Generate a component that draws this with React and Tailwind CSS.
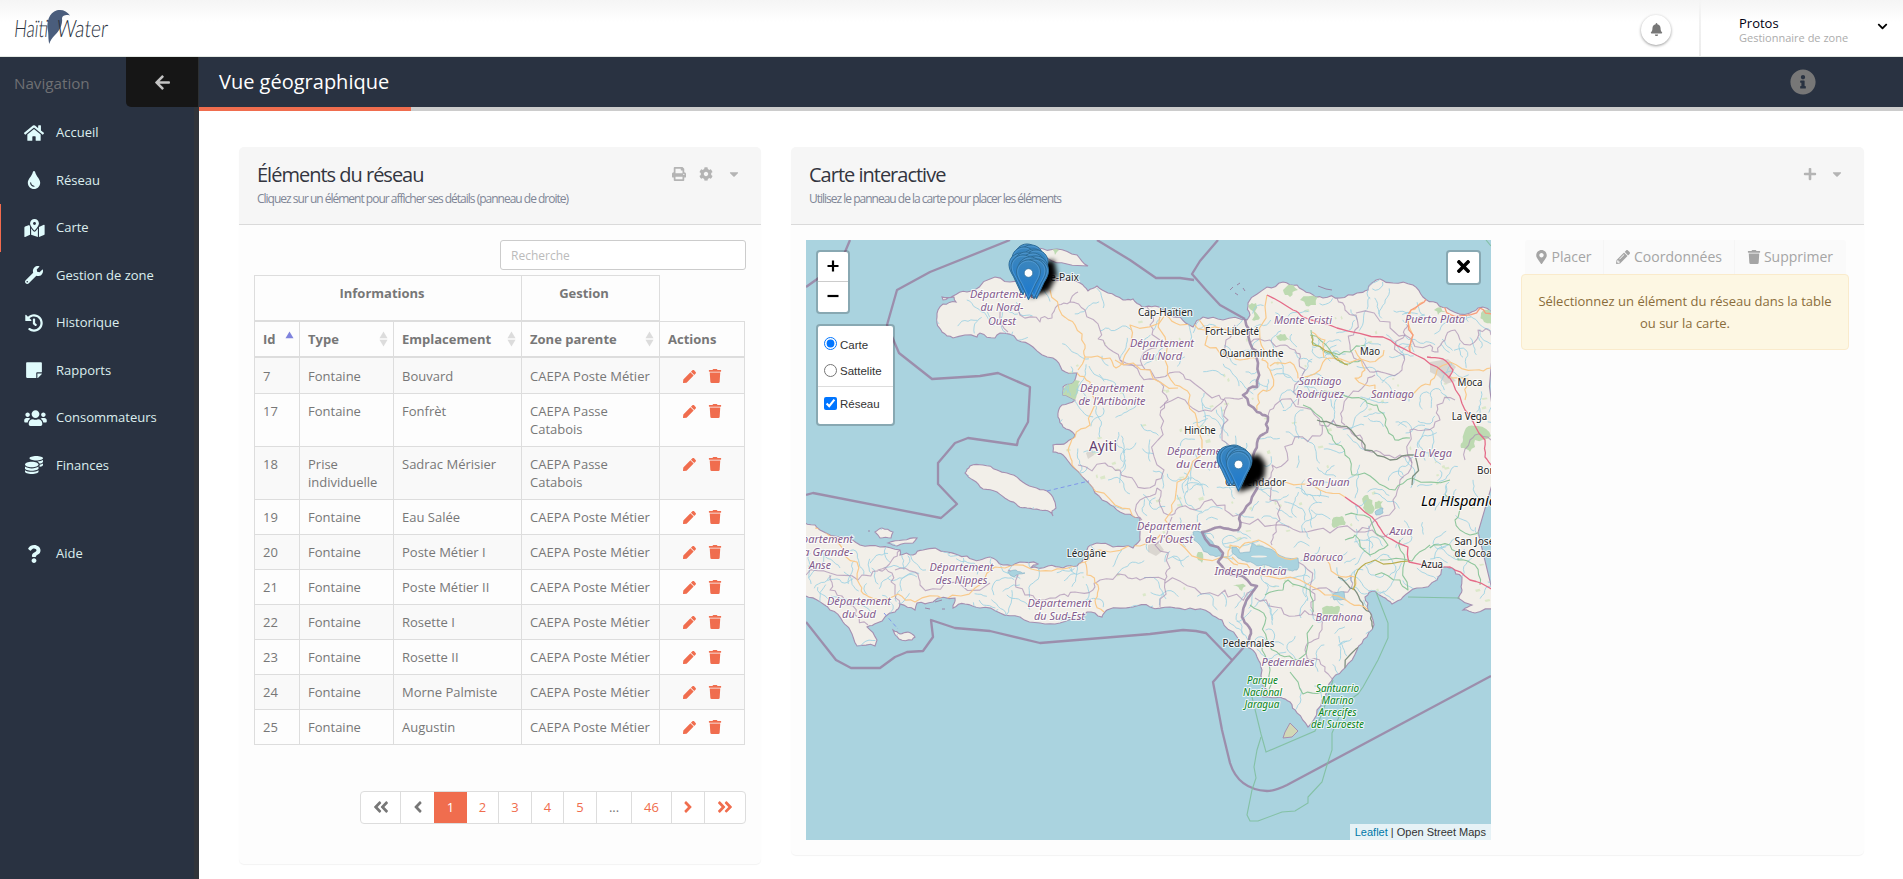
import React from "react";
import {
  FaHome, FaTint, FaMapMarkedAlt, FaWrench, FaHistory, FaStickyNote, FaUsers, FaCoins, FaQuestion,
  FaArrowLeft, FaBell, FaChevronDown, FaInfoCircle, FaPrint, FaCog, FaCaretDown, FaPlus,
  FaMapMarkerAlt, FaPen, FaPencilAlt, FaTrash, FaAngleDoubleLeft, FaAngleLeft, FaAngleRight,
  FaAngleDoubleRight, FaTimes,
} from "react-icons/fa";

/* ---------- map geometry ---------- */

function rng(seed) {
  let s = seed;
  return () => {
    s = (s * 1664525 + 1013904223) % 4294967296;
    return s / 4294967296;
  };
}

const parse = (str) => str.trim().split(/\s+/).map((p) => p.split(",").map(Number));

// Midpoint displacement gives coast lines, borders and roads a natural edge.
function rough(str, amount, seed, closed) {
  const rand = rng(seed);
  let pts = parse(str);
  if (closed) pts.push(pts[0]);
  for (let k = 0; k < 2; k++) {
    const out = [pts[0]];
    for (let i = 1; i < pts.length; i++) {
      const [ax, ay] = pts[i - 1];
      const [bx, by] = pts[i];
      const len = Math.hypot(bx - ax, by - ay);
      if (len > 4) {
        const d = (rand() - 0.5) * amount * len;
        out.push([(ax + bx) / 2 - ((by - ay) / len) * d, (ay + by) / 2 + ((bx - ax) / len) * d]);
      }
      out.push([bx, by]);
    }
    pts = out;
  }
  return "M" + pts.map(([x, y]) => x.toFixed(1) + " " + y.toFixed(1)).join("L") + (closed ? "Z" : "");
}

const straight = (str) => "M" + parse(str).map((p) => p.join(" ")).join("L");

const MAINLAND =
  "937,317 938,310 943,304 956,302 954,297 943,300 942,297 953,296 967,292 990,279 1010,282 1027,282 1047,283 1063,280 1080,283 1088,291 1097,286 1108,293 1123,300 1133,299 1142,307 1155,306 1167,315 1180,317 1193,327 1203,317 1223,320 1247,320 1250,315 1248,303 1267,287 1283,282 1297,285 1310,293 1323,298 1340,298 1357,293 1368,290 1372,283 1380,279 1393,283 1413,285 1423,297 1437,303 1450,310 1470,313 1478,308 1496,313 1496,606 1475,613 1463,610 1472,605 1458,598 1462,590 1462,577 1452,568 1442,568 1437,580 1417,588 1403,597 1392,604 1383,597 1375,591 1365,597 1368,610 1373,620 1367,637 1357,650 1345,668 1333,678 1327,690 1317,710 1308,727 1297,713 1290,702 1280,697 1263,697 1267,690 1262,670 1257,657 1247,647 1237,637 1222,620 1210,613 1190,608 1170,607 1150,607 1133,607 1107,610 1102,617 1087,612 1080,618 1060,623 1040,623 1020,617 1000,613 980,608 965,604 953,608 955,598 933,602 917,603 915,610 900,604 895,612 877,623 867,627 877,640 875,646 857,646 850,630 843,622 830,610 817,600 800,595 800,521 815,525 820,530 843,538 860,545 880,547 900,550 900,555 913,555 923,550 947,552 967,556 980,560 990,557 1003,565 1020,562 1038,564 1030,568 1048,566 1063,568 1077,566 1085,558 1088,547 1097,543 1113,547 1133,548 1140,540 1140,527 1140,518 1120,512 1107,502 1093,488 1073,467 1063,455 1053,452 1053,445 1067,442 1075,435 1063,427 1058,417 1062,405 1075,400 1063,395 1063,387 1073,383 1077,373 1062,370 1053,358 1033,347 1017,340 1000,333 995,338 980,333 977,337 953,338 942,332 937,323";

const ISLANDS = [
  "1030,250 1038,248 1057,249 1077,255 1088,266 1067,264 1047,258",
  "965,473 970,466 983,465 997,470 1007,473 1020,480 1033,487 1047,491 1054,500 1056,508 1052,511 1053,516 1050,512 1040,510 1027,508 1018,506 1008,500 997,492 983,489 973,480",
  "875,532 882,528 893,532 891,538 880,538",
  "888,543 903,540 917,538 913,543 897,546",
  "893,630 900,634 908,632 915,637 912,640 899,639",
];
const LAND = [rough(MAINLAND, 0.3, 11, true), ...ISLANDS.map((s, i) => rough(s, 0.2, 30 + i, true))];

const LAKES = [
  "1232,547 1236,547 1240,553 1250,552 1252,543 1262,546 1275,552 1298,558 1297,570 1288,570 1277,568 1260,566 1247,562 1238,558 1232,552",
  "1193,532 1205,533 1214,545 1222,555 1210,555 1200,545 1194,540",
  "1008,572 1016,570 1025,573 1014,577",
  "1333,594 1344,592 1346,600 1334,600",
  "1375,512 1383,508 1383,513 1376,515",
];

const GREENS = [
  "1283,290 1293,284 1298,290 1290,297 1285,295",
  "1300,300 1318,297 1316,305 1306,306",
  "1248,305 1256,303 1260,318 1252,320",
  "1434,310 1441,307 1446,312 1438,315",
  "1481,313 1496,310 1496,326 1484,322",
  "1466,428 1478,426 1491,436 1475,440 1470,452 1461,448 1463,440",
  "1364,496 1368,495 1374,507 1370,514 1363,508",
  "1332,520 1342,516 1345,525 1334,528",
  "1322,608 1332,606 1340,607 1338,615 1322,614",
  "1064,388 1080,381 1078,392 1070,401 1062,394",
  "1052,249 1059,250 1055,255",
  "1276,336 1285,334 1290,340 1280,341",
  "1198,552 1202,552 1202,563 1198,560",
  "1233,586 1246,586 1242,591",
  "1375,502 1383,501 1382,508 1375,509",
];

const MARITIME = [
  "850,240 845,252 830,270 806,287",
  "1010,240 930,272 897,290 887,325 899,353 932,379 980,376 998,373 1030,387 1028,422 1018,440 1017,445 968,438 955,443 938,463 938,484 957,504 941,518 813,493 806,495",
  "1097,240 1130,260 1156,278 1180,278 1194,280",
  "1218,240 1200,261 1192,274 1206,290 1220,305 1245,319",
  "1232,660 1206,633 1196,631 1183,630 1150,634 1040,643 990,631 955,628 931,620 933,637 923,651 907,652 895,657 880,668 851,668 836,660 806,622",
];
const BORDER =
  "1245,319 1250,343 1258,363 1257,387 1243,395 1257,412 1268,417 1267,432 1257,443 1253,460 1252,497 1240,515 1238,530 1220,527 1202,532 1223,553 1218,562 1237,575 1257,586 1242,617 1249,627 1249,640 1244,647";

const PROVINCES = [
  "1008,332 1000,315 1005,307 1020,315 1040,322 1052,318 1058,305 1070,302 1078,292",
  "1070,302 1085,310 1100,330 1105,345 1120,360 1142,365 1148,350 1160,340 1150,325 1147,307",
  "1120,360 1140,375 1160,382 1168,400 1160,415 1158,440 1164,470 1155,485 1135,482 1120,470 1105,463 1078,465",
  "1142,365 1155,378 1175,372 1190,380 1212,398 1225,400 1228,420 1222,440 1228,455",
  "1228,358 1226,340 1235,325",
  "1160,408 1185,400 1205,410 1225,398 1243,398",
  "1157,488 1160,505 1172,515 1180,507 1200,508 1225,505 1238,515",
  "1157,488 1140,500 1142,520",
  "1172,517 1155,545 1170,568 1165,580 1140,580 1125,575 1100,580 1093,590",
  "1093,590 1075,592 1060,595 1040,600 1025,595 1018,575 1008,570",
  "900,550 892,560 878,570 892,573 895,590 900,605",
  "895,570 915,572 920,585 945,583 990,583",
  "806,575 830,573 858,580 862,575 878,571",
  "830,575 830,590 845,600 855,615 868,625",
  "1165,580 1160,607",
  "1165,583 1195,588 1225,590 1228,597 1255,590",
  "1337,298 1345,310 1356,315 1355,330 1350,345 1358,360 1370,372 1385,373 1402,370 1404,356 1395,345 1405,335 1408,325",
  "1356,313 1390,322 1405,335 1430,345 1438,352 1445,340 1455,330 1470,345 1478,330 1491,335",
  "1250,343 1270,340 1285,345 1295,350 1299,360 1300,380 1298,405",
  "1268,417 1275,405 1305,408 1320,425 1345,428 1360,435 1365,450 1380,452 1400,455 1412,463",
  "1322,425 1320,436 1295,437 1288,460 1272,465 1268,480 1270,500 1280,520 1273,535 1272,545",
  "1345,425 1343,410 1350,395 1365,385 1375,375",
  "1240,522 1275,525 1300,532 1330,533 1365,532 1390,533",
  "1412,463 1400,480 1393,500 1375,520 1358,532",
  "1412,463 1410,430 1425,430 1440,420 1437,405 1455,400",
  "1465,460 1470,440 1475,435 1491,440",
  "1255,598 1275,607 1295,616 1315,615 1322,625 1314,640 1305,650 1310,660 1325,667 1333,680",
  "1298,562 1312,580 1315,600 1312,615",
  "1312,590 1340,593 1352,586 1350,575",
];

const GREEN_LINES = [
  "1311,330 1312,342 1328,353 1350,352 1365,345",
  "1310,335 1330,350 1345,364 1362,360",
  "1303,405 1325,425 1333,440 1345,455 1352,475 1375,480 1395,490 1412,478 1450,480",
  "1308,395 1340,392 1365,400 1377,405 1385,425 1395,440 1410,438",
  "1345,515 1370,518 1388,545 1370,555 1355,535 1345,540",
  "1375,575 1400,580 1408,590 1405,560 1400,540",
  "1250,605 1266,618 1267,640 1280,655 1298,660 1313,625",
  "1265,595 1283,590 1288,580 1310,590 1313,612",
  "1430,548 1450,545 1458,560 1475,565 1480,585",
  "1445,495 1460,505 1455,520 1470,535 1491,530",
  "1380,560 1412,561 1430,545",
  "1258,640 1262,650 1270,670 1270,695",
  "1290,672 1303,694 1322,692 1333,680",
];

const DARK_LINES = [
  "1317,420 1335,425 1355,435 1365,450 1390,460 1415,455 1412,485",
  "1338,577 1350,588 1360,600 1370,612 1372,625 1362,645 1345,668",
];

const ROADS = [
  "1050,290 1062,315 1075,325 1085,345 1085,357 1078,370",
  "1085,357 1110,358 1116,368 1125,355 1130,325 1165,315 1180,325 1205,330 1245,332",
  "1077,373 1090,382 1095,400 1090,425 1075,437 1068,450 1072,465 1090,485 1115,505 1140,520",
  "1160,315 1165,360 1175,385 1190,395 1197,420 1202,440 1190,470 1175,500 1165,520 1172,530",
  "1115,360 1150,370 1178,388",
  "815,528 840,545 857,562 860,585 866,595 880,600 898,594 915,602 945,600 975,588 1005,568 1040,571 1063,569 1085,562 1100,550 1140,546 1160,535 1185,548 1222,557 1238,565",
  "1085,562 1087,575 1098,585 1095,600 1104,612",
  "1267,295 1260,340 1262,360 1270,370 1270,390 1258,395 1257,410",
  "1270,366 1290,362 1298,378 1320,370 1330,358 1370,362 1384,350",
  "1324,358 1325,340 1312,332",
  "1228,557 1230,545 1240,548 1252,542 1275,550 1297,558",
  "1285,482 1320,490 1345,497",
  "1232,557 1260,575 1300,580 1325,595 1350,603 1368,610",
  "1320,555 1337,575 1355,577 1353,590",
  "1437,370 1450,362 1475,370 1491,368",
  "1450,378 1470,380 1465,400",
  "1437,370 1430,385 1415,392 1395,398",
  "1355,350 1365,370 1355,378 1375,385 1375,398",
  "1410,352 1413,335 1411,310 1423,302",
  "1200,310 1205,345 1225,355 1240,360 1255,358",
];
const RED_ROADS = [
  "1267,295 1293,310 1303,317 1337,328 1383,337 1410,352 1437,367 1453,383 1465,410 1485,440 1485,457 1493,467",
  "1427,357 1443,359 1453,370 1448,378",
  "1345,497 1372,517 1380,528 1387,537 1408,547 1409,562 1450,567 1470,580 1493,590",
];
const ORANGE_ROADS = ["1410,352 1413,335 1411,310 1427,298 1445,308 1460,316 1480,308 1493,314"];
const OLIVE_ROADS = ["1353,590 1358,570 1375,560 1410,561", "1312,335 1313,345 1335,358 1348,365"];

// Small tributaries, clipped to the land shapes.
const STREAMS = (() => {
  const rand = rng(77);
  const out = [];
  for (let i = 0; i < 700; i++) {
    let x = 806 + rand() * 685;
    let y = 275 + rand() * 450;
    let a = rand() * Math.PI * 2;
    const n = 4 + Math.floor(rand() * 8);
    let d = `M${x.toFixed(1)} ${y.toFixed(1)}`;
    for (let k = 0; k < n; k++) {
      a += (rand() - 0.5) * 1.5;
      x += Math.cos(a) * 3.2;
      y += Math.sin(a) * 3.2;
      d += `L${x.toFixed(1)} ${y.toFixed(1)}`;
    }
    // Gonâve has hardly any rivers.
    if (!(x > 955 && x < 1065 && y > 455 && y < 525)) out.push(d);
  }
  return out.join("");
})();

const MEADOWS = (() => {
  const rand = rng(5);
  const out = [];
  for (let i = 0; i < 110; i++) {
    const x = 1060 + rand() * 430;
    const y = 290 + rand() * 330;
    const w = 1 + rand() * 4;
    const h = 1 + rand() * 2.5;
    out.push(`M${x.toFixed(1)} ${y.toFixed(1)}l${w.toFixed(1)} ${(-h / 2).toFixed(1)}l1 ${h.toFixed(1)}l${(-w).toFixed(1)} 1z`);
  }
  return out.join("");
})();

// [text, centre x, baseline y, width]
const REGIONS = [
  ["Département", 1002, 298, 64], ["du Nord-", 1002, 311, 43], ["Ouest", 1002, 325, 28],
  ["Département", 1162, 347, 64], ["du Nord", 1162, 360, 40],
  ["Département", 1112, 392, 64], ["de l'Artibonite", 1112, 405, 67],
  ["Département", 1199, 455, 64], ["du Centre", 1202, 468, 52],
  ["Département", 1169, 530, 64], ["de l'Ouest", 1169, 543, 48],
  ["Département", 821, 543, 64], ["de la Grande-", 819, 556, 68], ["Anse", 820, 569, 22],
  ["Département", 859, 605, 64], ["du Sud", 859, 618, 34],
  ["Département", 961.5, 571, 64], ["des Nippes", 961.5, 584, 52],
  ["Département", 1059.5, 607, 64], ["du Sud-Est", 1059.5, 620, 51],
  ["Monte Cristi", 1303, 324, 58], ["Puerto Plata", 1435, 323, 60],
  ["Santiago", 1320, 385, 43], ["Rodríguez", 1320, 398, 48], ["Santiago", 1392.5, 398, 43],
  ["La Vega", 1433, 457, 38], ["San Juan", 1328, 486, 43], ["Azua", 1401, 535, 23],
  ["Baoruco", 1323, 561, 40], ["Independencia", 1250.5, 575, 72], ["Barahona", 1339, 621, 47],
  ["Pedernales", 1288, 666, 53],
];
const TOWNS = [
  ["Cap-Haïtien", 1165.5, 316, 55], ["Fort-Liberté", 1232, 335, 54], ["Ouanaminthe", 1251.5, 357, 64],
  ["Mao", 1370, 355, 20], ["Moca", 1470, 386, 25], ["La Vega", 1469.5, 420, 35.5], ["Bonao", 1492, 474, 30],
  ["Hinche", 1200, 434, 31.5], ["Comendador", 1255.5, 486, 61], ["Léogâne", 1086.5, 557, 39.5],
  ["San José", 1474.5, 545, 40], ["de Ocoa", 1473, 557, 37], ["Azua", 1432, 568, 22],
  ["Pedernales", 1248.5, 647, 52], ["Port-de-Paix", 1049.5, 281, 59],
];
const PARKS = [
  ["Parque", 1262.5, 684, 31], ["Nacional", 1262.5, 696, 39], ["Jaragua", 1262, 708, 35],
  ["Santuario", 1337.5, 692, 43], ["Marino", 1337.5, 704, 32], ["Arrecifes", 1337.5, 716, 38],
  ["del Suroeste", 1337.5, 728, 53],
];

function Labels({ items, className, size }) {
  return (
    <g className={className} fontSize={size} textAnchor="middle" stroke="#ffffff" strokeOpacity="0.75" strokeWidth="2.2" strokeLinejoin="round" style={{ paintOrder: "stroke" }}>
      {items.map(([t, x, y, w], i) => (
        <text key={i} x={x} y={y} textLength={w} lengthAdjust="spacingAndGlyphs">{t}</text>
      ))}
    </g>
  );
}

function Pin({ x, y }) {
  return (
    <g transform={`translate(${x - 12.5} ${y - 40.5})`}>
      <path d="M12.5.5C5.8.5.5 5.8.5 12.4c0 4.6 2.7 8.4 4.6 11.9L12.5 40.3l7.4-16c1.9-3.5 4.6-7.3 4.6-11.9C24.5 5.8 19.2.5 12.5.5z" fill="url(#pin)" stroke="#2e6c97" strokeWidth="1" />
      <path d="M12.5 1.6C6.4 1.6 1.6 6.4 1.6 12.4c0 4.3 2.5 7.9 4.5 11.5L12.5 37.7l6.4-13.8c2-3.6 4.5-7.2 4.5-11.500C23.400 6.400 18.600 1.600 12.500 1.600z" fill="none" stroke="#5ea4da" strokeOpacity="0.6" strokeWidth="1" />
      <circle cx="12.5" cy="13.500" r="4.300" fill="#ffffff" stroke="#2e6c97" strokeWidth="0.700" />
    </g>
  );
}

const PINS_NORTH = [
  [1027, 284], [1031, 285], [1024, 287], [1034, 289], [1021, 293], [1036, 290], [1026, 292],
  [1033, 293], [1023, 295], [1036, 296], [1036.5, 299], [1030, 297], [1034, 299], [1028.5, 300],
];
const PINS_CENTRE = [[1234, 485], [1229, 486], [1232, 486], [1238, 487], [1240, 489], [1238.5, 491.5]];

function MapDrawing() {
  const list = (arr, amount, base) => arr.map((s, i) => <path key={i} d={rough(s, amount, base + i)} />);
  return (
    <svg className="block h-full w-full" viewBox="806 240 685 600" fontFamily="'Noto Sans', sans-serif">
      <defs>
        <linearGradient id="pin" x1="0" y1="0" x2="0" y2="1">
          <stop offset="0" stopColor="#3c86bd" />
          <stop offset="1" stopColor="#1a78d0" />
        </linearGradient>
        <filter id="soft" x="-50%" y="-50%" width="200%" height="200%"><feGaussianBlur stdDeviation="2.6" /></filter>
        <clipPath id="land">{LAND.map((d, i) => <path key={i} d={d} />)}</clipPath>
      </defs>
      <rect x="806" y="240" width="685" height="600" fill="#aad3df" />
      <g fill="#f2efe9" stroke="#a58fb0" strokeWidth="1.1">
        {LAND.map((d, i) => <path key={i} d={d} />)}
      </g>
      <path d="M1290 723L1294 727L1298 731L1292 737L1283 738L1285 732Z" fill="#d1d8b6" stroke="#a58fb0" strokeWidth="1" />
      <g fill="none" clipPath="url(#land)" strokeLinejoin="round">
        <path d={MEADOWS} fill="#d5e6c0" fillOpacity="0.8" />
        <g fill="#bddab1">{GREENS.map((s, i) => <path key={i} d={rough(s, 0.5, 60 + i, true)} />)}</g>
        <g fill="#dad6d0">
          <path d="M1430 362l18-3 8 8-6 8 6 6-10 3-8-8-8-4z" />
          <path d="M1148 545l10-3 6 8-8 6-8-4z" /><path d="M1086 453l6-4 2 6-6 4z" />
        </g>
        <path d={STREAMS} stroke="#9fd2e3" strokeWidth="0.9" />
        <g stroke="#a98fb2" strokeWidth="1.1" strokeOpacity="0.7">{list(PROVINCES, 0.6, 100)}</g>
        <g stroke="#8fc69c" strokeWidth="1.1">{list(GREEN_LINES, 0.4, 200)}</g>
        <g stroke="#7f9080" strokeWidth="1.3">{list(DARK_LINES, 0.4, 240)}</g>
        <g fill="#aad3df" stroke="#8fb8cc" strokeWidth="0.7">{LAKES.map((s, i) => <path key={i} d={rough(s, 0.3, 90 + i, true)} />)}</g>
        <g stroke="#f9c98a" strokeWidth="1.2">{list(ROADS, 0.4, 300)}</g>
        <g stroke="#b9ad4e" strokeWidth="1.1">{list(OLIVE_ROADS, 0.3, 330)}</g>
        <g stroke="#f79c7c" strokeWidth="1.3">{list(ORANGE_ROADS, 0.4, 340)}</g>
        <g stroke="#e56b88" strokeWidth="1.3">{list(RED_ROADS, 0.15, 350)}</g>
      </g>
      <ellipse cx="1259" cy="556.5" rx="8" ry="1" fill="#f2efe9" />
      <g fill="none" stroke="#9a86a6" strokeOpacity="0.9" strokeWidth="2.3" strokeLinejoin="round">
        {MARITIME.map((s, i) => <path key={i} d={straight(s)} />)}
        <path d="M1244 647L1213 682L1222 730L1230 763C1236 782 1250 790 1267 791C1275 791 1281 788 1287 785L1491 676" />
        <path d={rough(BORDER, 0.35, 8)} strokeWidth="2.6" />
      </g>
      <g fill="none" stroke="#7fbf9f" strokeOpacity="0.9" strokeWidth="1.1">
        <path d="M1252 697L1261 734L1266 752L1315 731L1327 700L1333 680" />
        <path d="M1261 737L1257 750L1254 767L1256 778L1252 790L1247 815L1250 821L1258 821L1282 812L1295 811L1308 803L1308 797L1322 782L1327 765L1332 750L1332 733L1345 703L1358 694L1363 687L1378 660L1388 638L1388 623L1376 592" />
        <path d="M1408 597L1460 598M1486 240L1491 246" />
      </g>
      <path d="M1047 491L1089 481M884 613L898 629" stroke="#7f96ea" strokeWidth="1" strokeDasharray="4 3" fill="none" />
      <g fill="none" stroke="#9a86a6" strokeWidth="1">
        <path d="M1230 290l3-3m2 6l3 2m-1-10l3-2m3 5l2 3M1318 286l8 3 6 1M868 531h2M925 608l5 1M942 609l3 0M935 602l7-2" />
      </g>

      <Labels items={REGIONS} className="fill-[#845c8d] italic" size="11" />
      <Labels items={TOWNS} className="fill-[#262626]" size="10.5" />
      <Labels items={PARKS} className="fill-[#0a8420] italic" size="10" />
      <Labels items={[["Ayiti", 1103, 451, 28]]} className="fill-[#643f70]" size="13.5" />
      <Labels items={[["La Hispaniola", 1465, 506, 88]]} className="fill-black italic" size="14" />

      <g filter="url(#soft)">
        <path d="M1030 298L1042 262L1054 260L1057 275L1049 291Z" />
        <path d="M1240 490L1246 460L1258 456L1264 464L1263 476L1252 486Z" strokeWidth="3" stroke="#000000" />
      </g>
      {PINS_NORTH.map(([x, y], i) => <Pin key={i} x={x} y={y} />)}
      {PINS_CENTRE.map(([x, y], i) => <Pin key={i} x={x} y={y} />)}
    </svg>
  );
}

function MapView() {
  const box = "absolute box-border rounded-[4px] border-2 border-black/20 bg-white bg-clip-padding";
  return (
    <div className="relative h-[600px] w-[685px] shrink-0 overflow-hidden font-['Liberation_Sans',sans-serif] text-[12px] text-[#333]">
      <MapDrawing />
      <div className={`${box} left-[10px] top-[10px] h-[64px] w-[34px] text-center font-bold text-black`}>
        <div className="flex h-[30px] items-center justify-center border-b border-[#ccc] pb-[2px]">
          <svg className="size-[12px]" viewBox="0 0 12 12"><path d="M6 .5v11M.5 6h11" stroke="#000" strokeWidth="2.2" /></svg>
        </div>
        <div className="flex h-[30px] items-center justify-center pb-[3px]">
          <svg className="size-[12px]" viewBox="0 0 12 12"><path d="M.5 6h11" stroke="#000" strokeWidth="2.2" /></svg>
        </div>
      </div>
      <div className={`${box} left-[10px] top-[84px] flex h-[102px] w-[79px] flex-col text-[11.5px]`}>
        <label className="mt-[10px] flex h-[18px] items-center gap-[3px] pl-[6px]">
          <input type="radio" name="base" defaultChecked className="m-0 size-[13px] -translate-y-[2px]" />
          <span className="translate-y-[1px]">Carte</span>
        </label>
        <label className="mt-[9px] flex h-[18px] items-center gap-[3px] pl-[6px]">
          <input type="radio" name="base" className="m-0 size-[13px] -translate-y-[2px]" />
          <span>Sattelite</span>
        </label>
        <div className="mt-[5px] border-t border-[#ddd]" />
        <label className="mt-[9px] flex h-[18px] items-center gap-[3px] pl-[6px]">
          <input type="checkbox" defaultChecked className="m-0 size-[13px] -translate-y-[2px]" />
          <span>Réseau</span>
        </label>
      </div>
      <div className={`${box} right-[10px] top-[10px] flex h-[35px] w-[35px] items-center justify-center pb-[2px] text-black`}>
        <FaTimes className="size-[19px]" />
      </div>
      <div className="absolute bottom-0 right-0 h-[16px] bg-white/70 px-[5px] text-[11px] leading-[16px] whitespace-nowrap">
        <span className="text-[#0078a8]">Leaflet</span> | Open Street Maps
      </div>
    </div>
  );
}

/* ---------- shell ---------- */

function Logo() {
  return (
    <svg className="h-[52px] w-[124px]" viewBox="0 0 124 52" fontFamily="Lato, sans-serif" fontWeight="300" fill="#2a3240">
      <path d="M49.3 44C48 38 48.6 35 48 31C46 22 49 13 57 10.3C62 9 67 11 70 15.5C66 14.5 63 15 62 18C63 25 59 31 55 35C52 38 50 41 49.3 44Z" fill="#4a5d7c" />
      <g fontSize="24" transform="skewX(-6)">
        <text x="17.5" y="37.5" textLength="34" lengthAdjust="spacingAndGlyphs">Haïti</text>
        <text x="60" y="37.5" textLength="51" lengthAdjust="spacingAndGlyphs">Water</text>
      </g>
    </svg>
  );
}

function TopBar() {
  return (
    <header className="flex h-[57px] shrink-0 border-b border-[#e4e9e4] bg-linear-to-b from-[#f5f5f5] to-white to-40%">
      <Logo />
      <div className="ml-auto mt-[15px] flex size-[30px] items-center justify-center rounded-full bg-white pb-[2px] shadow-[0_1px_3px_rgba(0,0,0,0.4)]">
        <FaBell className="size-[13px] text-[#777]" />
      </div>
      <div className="ml-[28px] w-[2px] bg-linear-to-b from-[#f5f5f5] to-[#ececec]" />
      <div className="w-[202px] pl-[38px] pt-[14px]">
        <div className="flex h-[18px] items-center justify-between pr-[15px] text-[13px] leading-[18px] text-[#000011]">
          Protos
          <FaChevronDown className="mt-[7px] size-[11px] text-black" />
        </div>
        <div className="text-[11px] leading-[11px] text-[#acacac]">Gestionnaire de zone</div>
      </div>
    </header>
  );
}

const NAV = [
  [FaHome, "Accueil", "w-[20px]"], [FaTint, "Réseau", "w-[18px]"], [FaMapMarkedAlt, "Carte", "w-[21px]"],
  [FaWrench, "Gestion de zone", "w-[18px]"], [FaHistory, "Historique", "w-[18px]"],
  [FaStickyNote, "Rapports", "w-[18px]"], [FaUsers, "Consommateurs", "w-[23px] translate-x-[1px]"],
  [FaCoins, "Finances", "w-[18px]"],
];

function NavItem({ icon: Icon, label, active, size }) {
  return (
    <a className={`flex h-[47.5px] items-center border-l ${active ? "border-[#f26b4d]" : "border-transparent"}`}>
      <span className="ml-[21px] flex w-[24px] justify-center text-[#e0fbfc]"><Icon className={`h-[18px] shrink-0 ${size}`} /></span>
      <span className="ml-[10px] text-[13px] text-[#dceeee]">{label}</span>
    </a>
  );
}

function Sidebar() {
  return (
    <aside className="flex w-[199px] shrink-0 flex-col bg-[#293241]">
      <div className="flex h-[50px] shrink-0">
        <span className="w-[126px] pl-[14px] pt-[14px] text-[15.2px] leading-[24px] text-[#6f7073]">Navigation</span>
        <div className="flex flex-1 items-center justify-center rounded-bl-[5px] border-r border-[#2c2f31] bg-[#161616]">
          <FaArrowLeft className="size-[17px] text-[#c5c5c5]" />
        </div>
      </div>
      <nav className="flex-1 border-r-[5px] border-[#31343a] pt-[2px]">
        {NAV.map(([icon, label, size]) => <NavItem key={label} icon={icon} label={label} size={size} active={label === "Carte"} />)}
        <div className="h-[41px]" />
        <NavItem icon={FaQuestion} label="Aide" size="w-[18px]" />
      </nav>
    </aside>
  );
}

function CardHeader({ title, subtitle, children }) {
  return (
    <div className="flex h-[78px] justify-between rounded-t-[5px] border-b border-[#dadada] bg-[#f6f6f6] pl-[18px] pt-[14px]">
      <div className="pt-[1px]">
        <h2 className="text-[20px] leading-[26px] tracking-[-1px] text-[#33353f]">{title}</h2>
        <p className="mt-[1px] text-[12px] leading-[20px] tracking-[-1px] text-[#808697]">{subtitle}</p>
      </div>
      <div className="flex h-[26px] items-center text-[#b4b4b4]">{children}</div>
    </div>
  );
}

/* ---------- table ---------- */

const ROWS = [
  ["7", "Fontaine", "Bouvard", "CAEPA Poste Métier"],
  ["17", "Fontaine", "Fonfrèt", "CAEPA Passe Catabois"],
  ["18", "Prise individuelle", "Sadrac Mérisier", "CAEPA Passe Catabois"],
  ["19", "Fontaine", "Eau Salée", "CAEPA Poste Métier"],
  ["20", "Fontaine", "Poste Métier I", "CAEPA Poste Métier"],
  ["21", "Fontaine", "Poste Métier II", "CAEPA Poste Métier"],
  ["22", "Fontaine", "Rosette I", "CAEPA Poste Métier"],
  ["23", "Fontaine", "Rosette II", "CAEPA Poste Métier"],
  ["24", "Fontaine", "Morne Palmiste", "CAEPA Poste Métier"],
  ["25", "Fontaine", "Augustin", "CAEPA Poste Métier"],
];

function SortIcon({ asc }) {
  return (
    <svg className="h-[16px] w-[9px] shrink-0" viewBox="0 0 9 16">
      <path d="M.5 7.2L4.5.5L8.5 7.2Z" fill={asc ? "#7f83dd" : "#dcdcdc"} />
      {!asc && <path d="M.5 8.8L4.5 15.5L8.5 8.8Z" fill="#dcdcdc" />}
    </svg>
  );
}

function HeadCell({ label, asc, first }) {
  return (
    <th className={`h-[36px] border-b-2 border-r border-[#ddd] p-0 ${first ? "border-l" : ""}`}>
      <div className="flex items-center justify-between pl-[8px] pr-[5px]">{label}<SortIcon asc={asc} /></div>
    </th>
  );
}

function ElementsTable() {
  const base = "border-b border-r border-[#ddd] px-[8px] pb-[8px] align-top";
  return (
    <table className="mt-[5px] w-[491px] table-fixed border-separate border-spacing-0 text-left text-[13px] leading-[18px] text-[#777]">
      <colgroup>
        <col className="w-[46px]" /><col className="w-[94px]" /><col className="w-[128px]" /><col className="w-[138px]" /><col className="w-[85px]" />
      </colgroup>
      <thead>
        <tr>
          <th colSpan={3} className="h-[47px] border border-b-2 border-[#ddd] pt-[8px] text-center align-top pr-[12px]">Informations</th>
          <th className="border-b-2 border-r border-t border-[#ddd] pr-[13px] pt-[8px] text-center align-top">Gestion</th>
          <th className="border-b border-[#ddd]" />
        </tr>
        <tr>
          <HeadCell label="Id" asc first />
          <HeadCell label="Type" />
          <HeadCell label="Emplacement" />
          <HeadCell label="Zone parente" />
          <th className="border-b-2 border-r border-[#ddd] px-[8px] py-0">Actions</th>
        </tr>
      </thead>
      <tbody>
        {ROWS.map(([id, type, place, zone], i) => {
          const cell = `${base} ${i === 0 ? "pt-[9px]" : "pt-[8px]"}`;
          return (
            <tr key={id} className="odd:bg-[#f9f9f9]">
              <td className={`${cell} border-l`}>{id}</td>
              <td className={cell}>{type}</td>
              <td className={cell}>{place}</td>
              <td className={`${cell} pr-0`}>{zone.includes("Passe") ? <>CAEPA Passe<br />Catabois</> : zone}</td>
              <td className={cell}>
                <div className="flex h-[18px] items-center justify-center gap-[12px] text-[#f06d4e]">
                  <FaPen className="size-[13px]" /><FaTrash className="size-[14px]" />
                </div>
              </td>
            </tr>
          );
        })}
      </tbody>
    </table>
  );
}

function Pagination() {
  const item = "flex items-center justify-center border-r border-[#ddd]";
  return (
    <div className="flex h-[33px] w-[386px] self-end overflow-hidden rounded-[4px] border border-[#ddd] bg-white text-[13px] text-[#f06d4e]">
      <span className={`${item} w-[40px] pb-[2px] text-[#777]`}><FaAngleDoubleLeft className="size-[18px]" /></span>
      <span className={`${item} w-[33px] border-r-0 pb-[2px] text-[#777]`}><FaAngleLeft className="size-[18px]" /></span>
      <span className="-my-px flex w-[33px] items-center justify-center bg-[#f06d4e] text-white">1</span>
      <span className={`${item} w-[32px]`}>2</span>
      <span className={`${item} w-[33px]`}>3</span>
      <span className={`${item} w-[32px]`}>4</span>
      <span className={`${item} w-[33px]`}>5</span>
      <span className={`${item} w-[35px] text-[#777]`}>...</span>
      <span className={`${item} w-[40px]`}>46</span>
      <span className={`${item} w-[33px] pb-[2px]`}><FaAngleRight className="size-[18px]" /></span>
      <span className="flex flex-1 items-center justify-center pb-[2px]"><FaAngleDoubleRight className="size-[18px]" /></span>
    </div>
  );
}

function ElementsCard() {
  return (
    <section className="flex h-[717px] w-[522px] flex-col rounded-[5px] bg-[#fdfdfd] shadow-[0_1px_1px_rgba(0,0,0,0.05)]">
      <CardHeader title="Éléments du réseau" subtitle="Cliquez sur un élément pour afficher ses détails (panneau de droite)">
        <FaPrint className="mr-[13px] size-[14px]" />
        <FaCog className="mr-[14px] size-[14px]" />
        <FaCaretDown className="mr-[20px] size-[14px]" />
      </CardHeader>
      <div className="flex flex-1 flex-col pl-[15px] pr-[15px] pt-[15px]">
        <input placeholder="Recherche" className="h-[30px] w-[246px] self-end rounded-[3px] border border-[#ccc] bg-white px-[10px] text-[12px] placeholder:text-[#bbb]" />
        <ElementsTable />
        <div className="h-[46px]" />
        <Pagination />
      </div>
    </section>
  );
}

function MapCard() {
  return (
    <section className="h-[708px] w-[1073px] rounded-[5px] bg-[#fdfdfd] shadow-[0_1px_1px_rgba(0,0,0,0.05)]">
      <CardHeader title="Carte interactive" subtitle="Utilisez le panneau de la carte pour placer les éléments">
        <FaPlus className="mr-[13px] size-[14px]" />
        <FaCaretDown className="mr-[20px] size-[14px]" />
      </CardHeader>
      <div className="flex pl-[15px] pt-[15px]">
        <MapView />
        <div className="ml-[30px] w-[328px]">
          <div className="ml-[4px] flex h-[34px] w-[321px] rounded-t-[3px] bg-[#fafafa] text-[14px] text-[#a5a5a5]">
            <span className="flex w-[79px] items-center justify-center gap-[4px] border-r border-[#f5f5f5] pb-[1px]"><FaMapMarkerAlt className="h-[14px] w-[11px]" />Placer</span>
            <span className="flex w-[131px] items-center justify-center gap-[4px] border-r border-[#f5f5f5] pb-[1px]"><FaPencilAlt className="size-[14px]" />Coordonnées</span>
            <span className="flex flex-1 items-center justify-center gap-[3px] pb-[1px] pr-[1px]"><FaTrash className="size-[14px]" />Supprimer</span>
          </div>
          <div className="h-[76px] rounded-[4px] border border-[#faebcc] bg-[#fdf7e3] px-[15px] pt-[15px] text-center text-[13px] leading-[22px] text-[#8a6d3b]">
            Sélectionnez un élément du réseau dans la table ou sur la carte.
          </div>
        </div>
      </div>
    </section>
  );
}

export default function App() {
  return (
    <div className="flex h-[879px] w-[1903px] flex-col overflow-hidden bg-white font-['Open_Sans',sans-serif]">
      <TopBar />
      <div className="flex flex-1">
        <Sidebar />
        <main className="flex-1">
          <div className="flex h-[50px] items-center justify-between bg-[#293241] pl-[20px] pr-[87px]">
            <h1 className="text-[20px] text-white">Vue géographique</h1>
            <FaInfoCircle className="size-[26px] text-[#777]" />
          </div>
          <div className="h-[4px] bg-[#ccc]"><div className="h-full w-[212px] bg-[#f06d4e]" /></div>
          <div className="flex items-start gap-[30px] pl-[40px] pt-[36px]">
            <ElementsCard />
            <MapCard />
          </div>
        </main>
      </div>
    </div>
  );
}
